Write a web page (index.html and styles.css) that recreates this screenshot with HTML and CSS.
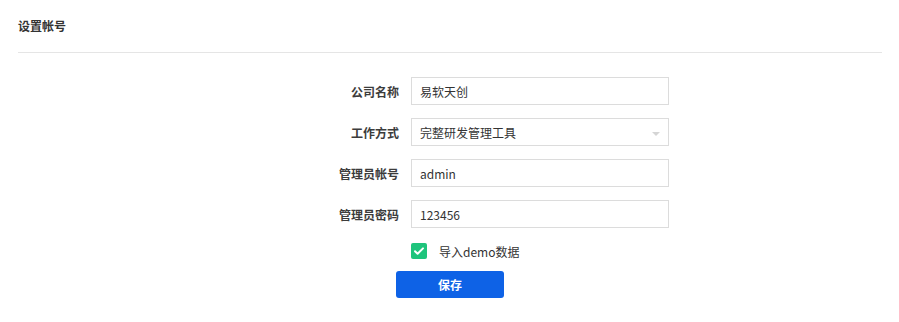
FILE: index.html
```html
<!DOCTYPE html>
<html lang="zh-CN">
<head>
<meta charset="utf-8">
<title>设置帐号</title>
<link rel="stylesheet" href="styles.css">
</head>
<body>
<div class="header"><h2 class="title">设置帐号</h2></div>
<form class="form">
  <div class="grid">
    <label class="label">公司名称</label>
    <div class="field"><input class="input" type="text" value="易软天创"></div>
    <label class="label">工作方式</label>
    <div class="field select"><span class="select-text">完整研发管理工具</span><span class="caret"></span></div>
    <label class="label">管理员帐号</label>
    <div class="field"><input class="input" type="text" value="admin"></div>
    <label class="label">管理员密码</label>
    <div class="field"><input class="input" type="text" value="123456"></div>
    <span></span>
    <div class="check-row">
      <span class="checkbox"><svg viewBox="0 0 16 16" width="16" height="16"><path d="M4 8.2l2.6 2.6L12 5.4" fill="none" stroke="#fff" stroke-width="2" stroke-linecap="round" stroke-linejoin="round"/></svg></span>
      <span class="check-label">导入demo数据</span>
    </div>
  </div>
  <div class="actions"><button type="button" class="btn">保存</button></div>
</form>
</body>
</html>
```
FILE: styles.css
```css
* { box-sizing: border-box; }
body {
  margin: 0;
  background: #fff;
  font-family: "Noto Sans CJK SC", "Noto Sans", sans-serif;
  color: #333;
  font-size: 12px;
}
.header {
  margin: 0 17px 0 18px;
  height: 53px;
  border-bottom: 1px solid #e5e5e5;
  display: flex;
  align-items: center;
}
.title {
  margin: 0 0 1px 0;
  font-size: 12px;
  font-weight: bold;
  color: #333;
}
.form {
  padding-top: 24px;
}
.grid {
  display: grid;
  grid-template-columns: 381px 258px;
  column-gap: 12px;
  row-gap: 13px;
  padding-left: 18px;
  grid-auto-rows: 28px;
}
.label {
  text-align: right;
  font-weight: bold;
  color: #3c3c3c;
  display: flex;
  align-items: center;
  justify-content: flex-end;
}
.field {
  height: 28px;
  border: 1px solid #dcdcdc;
  background: #fff;
  display: flex;
  align-items: center;
}
.input {
  border: 0;
  outline: none;
  width: 100%;
  height: 100%;
  padding: 0 8px;
  font: inherit;
  color: #333;
  background: transparent;
}
.select {
  padding: 0 8px;
  justify-content: space-between;
}
.caret {
  width: 0;
  height: 0;
  border-left: 4px solid transparent;
  border-right: 4px solid transparent;
  border-top: 4px solid #d5d5d5;
  margin-right: 0;
  margin-top: 3px;
}
.check-row {
  display: flex;
  align-items: center;
  gap: 12px;
  height: 18px;
  margin-top: 1px;
}
.grid .check-row { align-self: start; }
.checkbox {
  width: 16px;
  height: 16px;
  border-radius: 2px;
  background: #1ec47c;
  display: flex;
}
.check-label {
  color: #333;
  font-size: 12px;
}
.actions {
  padding-left: 396px;
  margin-top: 2px;
}
.btn {
  width: 108px;
  height: 27px;
  border: 0;
  border-radius: 3px;
  background: #0e62e6;
  color: #fff;
  font: inherit;
  font-weight: bold;
  cursor: pointer;
}
```
